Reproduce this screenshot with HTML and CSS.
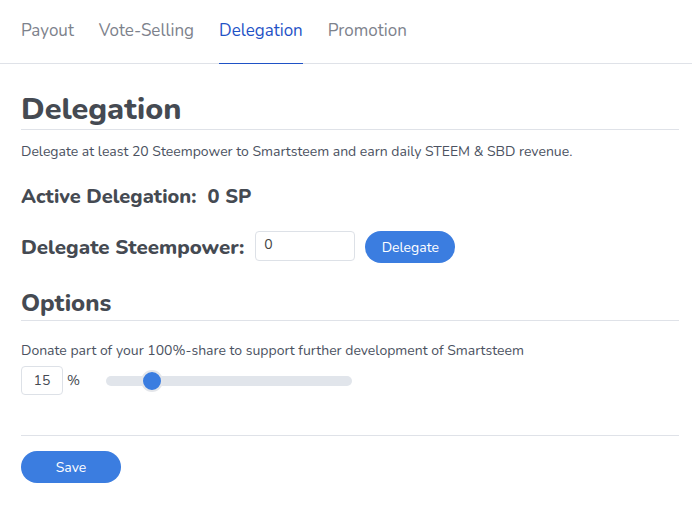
FILE: index.html
```html
<!DOCTYPE html>
<html>
<head>
<meta charset="utf-8">
<link rel="stylesheet" href="styles.css">
</head>
<body>
<nav class="tabs">
  <a class="tab">Payout</a>
  <a class="tab">Vote-Selling</a>
  <a class="tab active">Delegation</a>
  <a class="tab">Promotion</a>
</nav>
<main class="content">
  <h1 class="title">Delegation</h1>
  <p class="lead">Delegate at least 20 Steempower to Smartsteem and earn daily STEEM &amp; SBD revenue.</p>
  <h3 class="stat">Active Delegation:&nbsp; 0 SP</h3>
  <div class="row">
    <h3 class="stat">Delegate Steempower:</h3>
    <div class="field">0</div>
    <button class="btn">Delegate</button>
  </div>
  <h2 class="subtitle">Options</h2>
  <p class="lead donate-lead">Donate part of your 100%-share to support further development of Smartsteem</p>
  <div class="donate">
    <div class="small-field">15</div>
    <span class="pct">%</span>
    <div class="slider"><div class="thumb"></div></div>
  </div>
  <hr class="sep">
  <button class="btn save">Save</button>
</main>
</body>
</html>
```
FILE: styles.css
```css
* { box-sizing: border-box; }
body {
  margin: 0;
  font-family: "Nunito", "Lato", "Open Sans", sans-serif;
  color: #454a52;
  background: #fff;
}
.tabs {
  display: flex;
  gap: 25px;
  padding: 0 21px;
  border-bottom: 1px solid #dfe2e8;
  height: 64px;
}
.tab {
  font-size: 17px;
  color: #7d828c;
  padding-top: 19px;
  height: 64px;
  border-bottom: 2px solid transparent;
  margin-bottom: -1px;
}
.tab.active {
  color: #1f52c6;
  border-bottom: 1px solid #1f52c6;
}
.content {
  padding: 0 13px 0 21px;
}
.title {
  font-size: 30.6px;
  font-weight: 800;
  margin: 27px 0 0;
  padding-bottom: 2px;
  line-height: 36px;
  border-bottom: 1px solid #dfe2e8;
}
.lead {
  font-size: 14px;
  color: #4b5261;
  margin: 13px 0 0;
  line-height: 18px;
}
.stat {
  font-size: 20px;
  font-weight: 800;
  margin: 24px 0 0;
  line-height: 24px;
}
.row {
  display: flex;
  align-items: center;
  margin-top: 22px;
  height: 32px;
}
.row .stat { margin: 0 11px 0 0; font-size: 20.5px; }
.field {
  width: 100px;
  height: 30px;
  border: 1px solid #dde1e7;
  border-radius: 4px;
  font-size: 14px;
  padding: 3px 0 0 8px;
  color: #444;
  margin-top: -3px;
}
.btn {
  font-family: inherit;
  background: #3b7de0;
  color: #fff;
  border: none;
  border-radius: 16px;
  height: 32px;
  width: 90px;
  font-size: 14px;
  margin-left: 10px;
  padding: 0;
}
.subtitle {
  font-size: 24px;
  font-weight: 800;
  margin: 25px 0 0;
  line-height: 30px;
  padding-bottom: 2px;
  border-bottom: 1px solid #dfe2e8;
}
.donate-lead { margin-top: 21px; }
.donate {
  display: flex;
  align-items: center;
  margin-top: 6px;
}
.small-field {
  width: 42px;
  height: 29px;
  border: 1px solid #dde1e7;
  border-radius: 4px;
  font-size: 14px;
  text-align: center;
  line-height: 27px;
}
.pct {
  font-size: 14px;
  margin-left: 4px;
  width: 39px;
}
.slider {
  position: relative;
  width: 246px;
  height: 10px;
  background: #e1e5eb;
  border-radius: 5px;
}
.thumb {
  position: absolute;
  left: 35px;
  top: -6px;
  width: 22px;
  height: 22px;
  border-radius: 50%;
  background: #3b7de0;
  border: 2px solid #e4e6ea;
}
.sep {
  border: none;
  border-top: 1px solid #dfe2e8;
  margin: 40px 0 0;
}
.save {
  margin: 15px 0 0;
  width: 100px;
}
```
